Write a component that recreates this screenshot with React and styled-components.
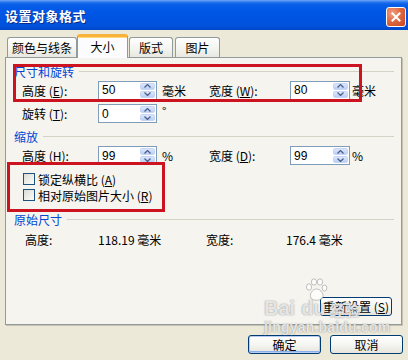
import React from 'react';
import styled, { createGlobalStyle, css } from 'styled-components';

const Global = createGlobalStyle`
  html, body { margin: 0; padding: 0; }
  body {
    width: 408px; height: 360px; overflow: hidden;
    background: #ECE9D8;
    font-family: "Noto Sans CJK SC", "Liberation Sans", sans-serif;
    font-size: 12px; color: #000;
  }
`;

const Window = styled.div`
  position: relative;
  width: 408px;
  height: 360px;
  background: #ECE9D8;
  display: flex;
  flex-direction: column;
`;

const TitleBar = styled.div`
  height: 30px;
  flex: none;
  display: flex;
  align-items: center;
  justify-content: space-between;
  padding: 0 2px 0 5px;
  background: linear-gradient(to bottom, #6EA6F7 0, #2E7AF0 2px, #0A60E8 4px, #0058E6 10px, #0055E3 50%, #0052DD 85%, #0046C8 100%);
`;

const Title = styled.div`
  color: #fff;
  font-weight: bold;
  font-size: 13px;
  letter-spacing: 0.5px;
  text-shadow: 1px 1px 0 #0A2C8C;
`;

const CloseBtn = styled.div`
  width: 18px;
  height: 18px;
  margin-top: 3px;
  border: 1px solid #fff;
  border-radius: 3px;
  background: radial-gradient(circle at 30% 30%, #F2A285 0%, #E06A43 45%, #C8421C 100%);
  display: flex;
  align-items: center;
  justify-content: center;
`;

const Content = styled.div`
  padding: 3px 0 0 5px;
  display: flex;
  flex-direction: column;
`;

const TabRow = styled.div`
  display: flex;
  align-items: flex-end;
  height: 24px;
  padding-left: 2px;
  position: relative;
  z-index: 1;
`;

const Tab = styled.div`
  width: ${p => p.$w}px;
  margin-left: ${p => p.$ml || 0}px;
  height: 20px;
  box-sizing: border-box;
  border: 1px solid #919B9C;
  border-bottom: none;
  border-radius: 3px 3px 0 0;
  background: linear-gradient(to bottom, #FFFFFF, #F3F3EF 60%, #E8E7E0);
  display: flex;
  align-items: center;
  justify-content: center;
  font-size: 12px;
  ${p => p.$active && css`
    height: 24px;
    margin-bottom: -1px;
    background: #FCFCFE;
    border-top: 3px solid #F8B23C;
    box-shadow: inset 0 1px 0 #FFD777;
    padding-bottom: 3px;
  `}
`;

const Panel = styled.div`
  width: 397px;
  height: 268px;
  box-sizing: border-box;
  border: 1px solid #919B9C;
  box-shadow: 1px 1px 0 #C5C2B2;
  background: #F5F4EF;
  padding: 6px 7px 8px 8px;
  display: flex;
  flex-direction: column;
`;

const SectionHead = styled.div`
  height: 14px;
  display: flex;
  align-items: center;
  gap: 5px;
  color: #0046D5;
  margin-top: ${p => p.$mt || 0}px;
  &::after {
    content: "";
    flex: 1;
    height: 1px;
    background: #D4D2C4;
  }
`;

const Row = styled.div`
  display: flex;
  align-items: center;
  height: ${p => p.$h || 20}px;
  margin-top: ${p => p.$mt || 0}px;
  padding-left: ${p => p.$pl ?? 8}px;
`;

const Label = styled.div`
  width: ${p => p.$w}px;
  flex: none;
  white-space: nowrap;
  u { text-decoration: underline; text-underline-offset: 1px; }
`;

const Unit = styled.div`
  width: ${p => p.$w || 'auto'};
  flex: none;
  padding-left: ${p => p.$pl || 5}px;
  box-sizing: border-box;
  ${p => p.$sup && css`align-self: flex-start; margin-top: -2px;`}
`;

const SpinWrap = styled.div`
  width: ${p => p.$w}px;
  height: 19px;
  flex: none;
  box-sizing: border-box;
  border: 1px solid #7F9DB9;
  background: #fff;
  display: flex;
  align-items: stretch;
`;

const SpinValue = styled.div`
  flex: 1;
  padding-left: 3px;
  display: flex;
  align-items: center;
  font-family: "Liberation Sans", sans-serif;
  font-size: 12px;
`;

const SpinBtns = styled.div`
  width: 15px;
  display: flex;
  flex-direction: column;
  padding: 1px 1px 1px 0;
  gap: 1px;
`;

const SpinBtn = styled.div`
  flex: 1;
  border-radius: 2px;
  background: linear-gradient(to bottom, #DCE7FD, #BACEF8);
  border: 1px solid #C8D6F5;
  display: flex;
  align-items: center;
  justify-content: center;
`;

const Check = styled.div`
  width: 12px;
  height: 12px;
  box-sizing: border-box;
  border: 1px solid #1C5180;
  background: linear-gradient(135deg, #DCDCD6, #FBFBF9);
  margin-right: 3px;
  flex: none;
`;

const Button = styled.div`
  width: ${p => p.$w}px;
  height: 19px;
  box-sizing: border-box;
  border: 1px solid #003C74;
  border-radius: 3px;
  background: linear-gradient(to bottom, #FFFFFF, #F4F4F0 55%, #E5E4DC);
  display: flex;
  align-items: center;
  justify-content: center;
  font-size: 12px;
  ${p => p.$default && css`
    box-shadow: inset 0 0 0 1px #B7CDF2, inset 0 -1px 0 1px #8AAEEA;
  `}
`;

const ResetRow = styled.div`
  margin-top: auto;
  display: flex;
  justify-content: flex-end;
  padding-right: 2px;
`;

const Footer = styled.div`
  display: flex;
  justify-content: flex-end;
  gap: 9px;
  padding: 10px 5px 0 0;
`;

const Highlight = styled.div`
  position: absolute;
  left: ${p => p.$x}px;
  top: ${p => p.$y}px;
  width: ${p => p.$w}px;
  height: ${p => p.$h}px;
  box-sizing: border-box;
  border: 3px solid #CC1420;
  pointer-events: none;
`;

const Watermark = styled.div`
  position: absolute;
  left: 264px;
  top: 278px;
  width: 120px;
  height: 58px;
  pointer-events: none;
  color: rgba(255, 255, 255, 0.8);
  text-shadow: 0 0 1px rgba(110, 110, 110, 0.75), 0 0 2px rgba(140, 140, 140, 0.45);
  display: flex;
  flex-direction: column;
`;

const LogoLine = styled.div`
  display: flex;
  align-items: flex-end;
  height: 40px;
  font-family: "Liberation Sans", sans-serif;
  font-weight: bold;
  font-size: 20px;
  line-height: 1;
  position: relative;
`;

const LogoCn = styled.span`
  font-family: "Noto Sans CJK SC", sans-serif;
  font-size: 15px;
  margin-left: 4px;
  margin-bottom: 1px;
`;

const Paw = styled.svg`
  position: absolute;
  left: 40px;
  top: 0;
`;

const Url = styled.div`
  font-family: "Liberation Sans", sans-serif;
  font-size: 14px;
  font-weight: bold;
  line-height: 15px;
  margin-top: 2px;
  letter-spacing: 0.2px;
`;

const Up = () => (
  <svg width="7" height="4" viewBox="0 0 7 4"><path d="M0.5 3.5 L3.5 0.5 L6.5 3.5" fill="none" stroke="#4D6185" strokeWidth="1.3" /></svg>
);
const Down = () => (
  <svg width="7" height="4" viewBox="0 0 7 4"><path d="M0.5 0.5 L3.5 3.5 L6.5 0.5" fill="none" stroke="#4D6185" strokeWidth="1.3" /></svg>
);

const Spin = ({ value, w }) => (
  <SpinWrap $w={w}>
    <SpinValue>{value}</SpinValue>
    <SpinBtns>
      <SpinBtn><Up /></SpinBtn>
      <SpinBtn><Down /></SpinBtn>
    </SpinBtns>
  </SpinWrap>
);

export default function App() {
  return (
    <Window>
      <Global />
      <TitleBar>
        <Title>设置对象格式</Title>
        <CloseBtn>
          <svg width="10" height="10" viewBox="0 0 10 10">
            <path d="M1.5 1.5 L8.5 8.5 M8.5 1.5 L1.5 8.5" stroke="#fff" strokeWidth="2" strokeLinecap="square" />
          </svg>
        </CloseBtn>
      </TitleBar>
      <Content>
        <TabRow>
          <Tab $w={70}>颜色与线条</Tab>
          <Tab $w={51} $active>大小</Tab>
          <Tab $w={44} $ml={1}>版式</Tab>
          <Tab $w={45} $ml={2}>图片</Tab>
        </TabRow>
        <Panel>
          <SectionHead>尺寸和旋转</SectionHead>
          <Row $mt={2}>
            <Label $w={76}>高度 (<u>E</u>):</Label>
            <Spin value="50" w={59} />
            <Unit $w="52px">毫米</Unit>
            <Label $w={81}>宽度 (<u>W</u>):</Label>
            <Spin value="80" w={60} />
            <Unit $pl={2}>毫米</Unit>
          </Row>
          <Row $mt={4} $h={19}>
            <Label $w={76}>旋转 (<u>T</u>):</Label>
            <Spin value="0" w={59} />
            <Unit $sup $pl={5}>°</Unit>
          </Row>
          <SectionHead $mt={6}>缩放</SectionHead>
          <Row $mt={3} $h={19}>
            <Label $w={76}>高度 (<u>H</u>):</Label>
            <Spin value="99" w={59} />
            <Unit $w="52px">%</Unit>
            <Label $w={81}>宽度 (<u>D</u>):</Label>
            <Spin value="99" w={60} />
            <Unit $pl={2}>%</Unit>
          </Row>
          <Row $mt={6} $h={16} $pl={9}>
            <Check />
            <Label>锁定纵横比 (<u>A</u>)</Label>
          </Row>
          <Row $h={16} $pl={9}>
            <Check />
            <Label>相对原始图片大小 (<u>R</u>)</Label>
          </Row>
          <SectionHead $mt={9}>原始尺寸</SectionHead>
          <Row $mt={6} $h={14} $pl={11}>
            <Label $w={73}>高度:</Label>
            <Label $w={108}>118.19 毫米</Label>
            <Label $w={80}>宽度:</Label>
            <Label>176.4 毫米</Label>
          </Row>
          <ResetRow>
            <Button $w={72}>重新设置 (<u>S</u>)</Button>
          </ResetRow>
        </Panel>
      </Content>
      <Footer>
        <Button $w={73} $default>确定</Button>
        <Button $w={73}>取消</Button>
      </Footer>
      <Highlight $x={13} $y={64} $w={349} $h={38} />
      <Highlight $x={7} $y={162} $w={158} $h={50} />
      <Watermark>
        <LogoLine>
          <span>Bai</span>
          <span style={{ marginLeft: 6 }}>du</span>
          <LogoCn>经验</LogoCn>
          <Paw width="24" height="24" viewBox="0 0 24 24" fill="rgba(255,255,255,0.75)" stroke="rgba(120,120,120,0.55)" strokeWidth="0.8">
            <ellipse cx="5" cy="9" rx="2.6" ry="3.2" />
            <ellipse cx="10" cy="4" rx="2.6" ry="3.2" />
            <ellipse cx="16" cy="4" rx="2.6" ry="3.2" />
            <ellipse cx="20.5" cy="10" rx="2.4" ry="3" />
            <path d="M12.5 11 C8 11 5 17 7 20 C9 23 16 23 18.5 20 C20.5 17 17 11 12.5 11 Z" />
          </Paw>
        </LogoLine>
        <Url>jingyan.baidu.com</Url>
      </Watermark>
    </Window>
  );
}
